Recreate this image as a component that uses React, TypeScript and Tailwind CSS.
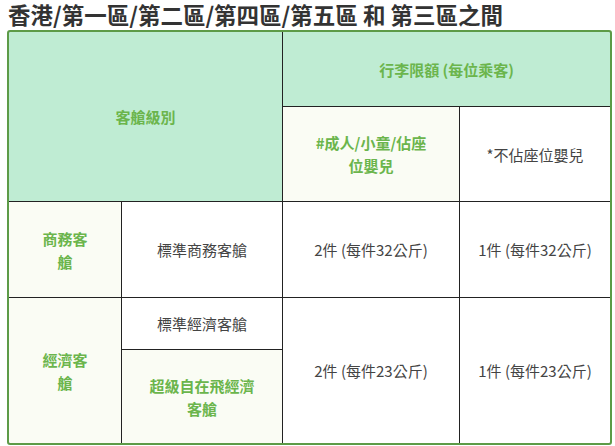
const font = { fontFamily: '"Noto Sans CJK TC", "Noto Sans", sans-serif' }

const head = "bg-[#bfecd3] text-[#6bb54c] font-semibold"
const soft = "bg-[#fafcf4] text-[#6bb54c] font-semibold"
const plain = "bg-white text-[#444]"

function Cell({ className, children }: { className: string; children: React.ReactNode }) {
  return (
    <div className={`flex items-center justify-center text-center text-[15px] leading-[23px] ${className}`}>
      {children}
    </div>
  )
}

export default function App() {
  return (
    <div className="h-[446px] w-[615px] bg-white" style={font}>
      <h1 className="h-[30px] pl-[8px] text-[22.5px] font-bold leading-[28px] text-[#333]">
        香港/第一區/第二區/第四區/第五區 和 第三區之間
      </h1>
      <div className="ml-[7px] w-[605px] overflow-hidden rounded-[3px] border-2 border-[#5d9b47]">
        <div className="grid grid-cols-[112px_160px_176px_150px] grid-rows-[74px_94px_95px_51px_93px] gap-px bg-[#222]">
          <Cell className={`${head} col-span-2 row-span-2 text-[14px]`}>客艙級別</Cell>
          <Cell className={`${head} col-span-2`}>行李限額 (每位乘客)</Cell>
          <Cell className={soft}>
            #成人/小童/佔座
            <br />
            位嬰兒
          </Cell>
          <Cell className={plain}>*不佔座位嬰兒</Cell>

          <Cell className={soft}>
            商務客
            <br />
            艙
          </Cell>
          <Cell className={plain}>標準商務客艙</Cell>
          <Cell className={plain}>2件 (每件32公斤)</Cell>
          <Cell className={plain}>1件 (每件32公斤)</Cell>

          <Cell className={`${soft} row-span-2`}>
            經濟客
            <br />
            艙
          </Cell>
          <Cell className={plain}>標準經濟客艙</Cell>
          <Cell className={`${plain} row-span-2`}>2件 (每件23公斤)</Cell>
          <Cell className={`${plain} row-span-2`}>1件 (每件23公斤)</Cell>
          <Cell className={soft}>
            超級自在飛經濟
            <br />
            客艙
          </Cell>
        </div>
      </div>
    </div>
  )
}
